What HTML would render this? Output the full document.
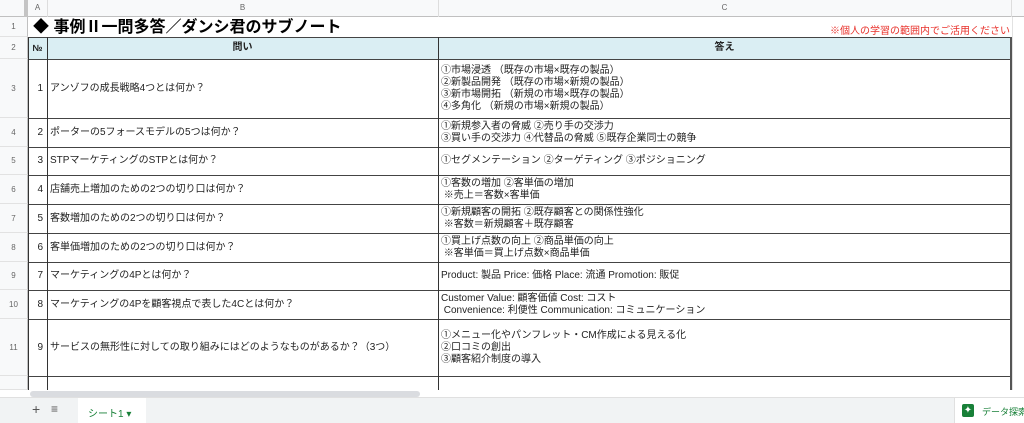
<!DOCTYPE html><html><head><meta charset="utf-8"><style>
*{margin:0;padding:0;box-sizing:border-box}
body{width:1024px;height:423px;overflow:hidden;background:#fff;position:relative;font-family:"Liberation Sans","Noto Sans CJK JP",sans-serif;font-size:10px;color:#222}
.a{position:absolute}
.rh{position:absolute;left:0;width:28px;background:#f8f9fa;border-right:1px solid #c0c0c0;border-bottom:1px solid #e2e2e2;color:#666;font-size:8px;display:flex;align-items:center;justify-content:center}
.hl{position:absolute;left:28px;width:983px;height:1px;background:#444}
.vl{position:absolute;width:1px;background:#333}
.cell{position:absolute;display:flex;align-items:center;line-height:12px}
.n{justify-content:flex-end;padding-right:4px;font-size:10px}
</style></head><body>
<div class="a" style="left:0;top:0;width:1024px;height:17px;background:#f8f9fa;border-bottom:1px solid #c0c0c0"></div>
<div class="a" style="left:0;top:0;width:28px;height:17px;border-right:4px solid #c4c4c4"></div>
<div class="a" style="left:28px;top:3px;width:19px;text-align:center;font-size:8px;color:#666">A</div>
<div class="a" style="left:47px;top:0;width:1px;height:17px;background:#ddd"></div>
<div class="a" style="left:47px;top:3px;width:391px;text-align:center;font-size:8px;color:#666">B</div>
<div class="a" style="left:438px;top:0;width:1px;height:17px;background:#ddd"></div>
<div class="a" style="left:438px;top:3px;width:573px;text-align:center;font-size:8px;color:#666">C</div>
<div class="a" style="left:1011px;top:0;width:1px;height:17px;background:#ddd"></div>
<div class="rh" style="top:17px;height:20px">1</div>
<div class="rh" style="top:37px;height:22px">2</div>
<div class="rh" style="top:59px;height:59px">3</div>
<div class="rh" style="top:118px;height:29px">4</div>
<div class="rh" style="top:147px;height:28px">5</div>
<div class="rh" style="top:175px;height:29px">6</div>
<div class="rh" style="top:204px;height:29px">7</div>
<div class="rh" style="top:233px;height:29px">8</div>
<div class="rh" style="top:262px;height:28px">9</div>
<div class="rh" style="top:290px;height:29px">10</div>
<div class="rh" style="top:319px;height:57px">11</div>
<div class="rh" style="top:376px;height:14px"></div>
<div class="a" style="left:1012px;top:17px;width:12px;height:373px;border-left:1px solid #e2e2e2"></div>
<div class="a" style="left:33px;top:17px;height:20px;font-size:16px;font-weight:bold;line-height:21px;color:#000">◆ 事例Ⅱ一問多答／ダンシ君のサブノート</div>
<div class="a" style="left:830px;top:22px;font-size:10px;color:#e8302a">※個人の学習の範囲内でご活用ください</div>
<div class="a" style="left:28px;top:37px;width:983px;height:22px;background:#daeef3"></div>
<div class="cell" style="left:28px;top:37px;width:19px;height:22px;justify-content:center;font-weight:bold;font-size:9px">№</div>
<div class="cell" style="left:47px;top:37px;width:391px;height:22px;justify-content:center;font-weight:bold">問い</div>
<div class="cell" style="left:438px;top:37px;width:573px;height:22px;justify-content:center;font-weight:bold">答え</div>
<div class="hl" style="top:37px"></div>
<div class="hl" style="top:59px"></div>
<div class="hl" style="top:118px"></div>
<div class="hl" style="top:147px"></div>
<div class="hl" style="top:175px"></div>
<div class="hl" style="top:204px"></div>
<div class="hl" style="top:233px"></div>
<div class="hl" style="top:262px"></div>
<div class="hl" style="top:290px"></div>
<div class="hl" style="top:319px"></div>
<div class="hl" style="top:376px"></div>
<div class="vl" style="left:28px;top:37px;height:353px"></div>
<div class="vl" style="left:47px;top:37px;height:353px"></div>
<div class="vl" style="left:438px;top:37px;height:353px"></div>
<div class="vl" style="left:1010px;top:37px;height:353px;width:2px;background:#555"></div>
<div class="cell n" style="left:28px;top:59px;width:19px;height:59px">1</div>
<div class="cell" style="left:50px;top:59px;height:59px">アンゾフの成長戦略4つとは何か？</div>
<div class="cell" style="left:441px;top:59px;height:59px">①市場浸透 （既存の市場×既存の製品）<br>②新製品開発 （既存の市場×新規の製品）<br>③新市場開拓 （新規の市場×既存の製品）<br>④多角化 （新規の市場×新規の製品）</div>
<div class="cell n" style="left:28px;top:118px;width:19px;height:29px">2</div>
<div class="cell" style="left:50px;top:118px;height:29px">ポーターの5フォースモデルの5つは何か？</div>
<div class="cell" style="left:441px;top:118px;height:29px">①新規参入者の脅威 ②売り手の交渉力<br>③買い手の交渉力 ④代替品の脅威 ⑤既存企業同士の競争</div>
<div class="cell n" style="left:28px;top:147px;width:19px;height:28px">3</div>
<div class="cell" style="left:50px;top:147px;height:28px">STPマーケティングのSTPとは何か？</div>
<div class="cell" style="left:441px;top:147px;height:28px">①セグメンテーション ②ターゲティング ③ポジショニング</div>
<div class="cell n" style="left:28px;top:175px;width:19px;height:29px">4</div>
<div class="cell" style="left:50px;top:175px;height:29px">店舗売上増加のための2つの切り口は何か？</div>
<div class="cell" style="left:441px;top:175px;height:29px">①客数の増加 ②客単価の増加<br>&nbsp;※売上＝客数×客単価</div>
<div class="cell n" style="left:28px;top:204px;width:19px;height:29px">5</div>
<div class="cell" style="left:50px;top:204px;height:29px">客数増加のための2つの切り口は何か？</div>
<div class="cell" style="left:441px;top:204px;height:29px">①新規顧客の開拓 ②既存顧客との関係性強化<br>&nbsp;※客数＝新規顧客＋既存顧客</div>
<div class="cell n" style="left:28px;top:233px;width:19px;height:29px">6</div>
<div class="cell" style="left:50px;top:233px;height:29px">客単価増加のための2つの切り口は何か？</div>
<div class="cell" style="left:441px;top:233px;height:29px">①買上げ点数の向上 ②商品単価の向上<br>&nbsp;※客単価＝買上げ点数×商品単価</div>
<div class="cell n" style="left:28px;top:262px;width:19px;height:28px">7</div>
<div class="cell" style="left:50px;top:262px;height:28px">マーケティングの4Pとは何か？</div>
<div class="cell" style="left:441px;top:262px;height:28px">Product: 製品 Price: 価格 Place: 流通 Promotion: 販促</div>
<div class="cell n" style="left:28px;top:290px;width:19px;height:29px">8</div>
<div class="cell" style="left:50px;top:290px;height:29px">マーケティングの4Pを顧客視点で表した4Cとは何か？</div>
<div class="cell" style="left:441px;top:290px;height:29px">Customer Value: 顧客価値 Cost: コスト<br>&nbsp;Convenience: 利便性 Communication: コミュニケーション</div>
<div class="cell n" style="left:28px;top:319px;width:19px;height:57px">9</div>
<div class="cell" style="left:50px;top:319px;height:57px">サービスの無形性に対しての取り組みにはどのようなものがあるか？（3つ）</div>
<div class="cell" style="left:441px;top:319px;height:57px">①メニュー化やパンフレット・CM作成による見える化<br>②口コミの創出<br>③顧客紹介制度の導入</div>
<div class="a" style="left:0;top:390px;width:1024px;height:8px;background:#fff"></div>
<div class="a" style="left:30px;top:391px;width:390px;height:6px;background:#dadce0;border-radius:3px"></div>
<div class="a" style="left:0;top:397px;width:1024px;height:26px;background:#f1f3f4;border-top:1px solid #e0e0e0"></div>
<div class="a" style="left:32px;top:401px;font-size:14px;color:#555">+</div>
<div class="a" style="left:51px;top:402px;font-size:12px;color:#555">≡</div>
<div class="a" style="left:78px;top:398px;width:68px;height:25px;background:#fff"></div>
<div class="a" style="left:88px;top:405px;font-size:10px;color:#188038">シート1 ▾</div>
<div class="a" style="left:954px;top:398px;width:70px;height:25px;background:#fff;border-left:1px solid #e0e0e0"></div>
<div class="a" style="left:962px;top:404px;width:12px;height:13px;background:#188038;border-radius:2px;color:#fff;font-size:10px;line-height:13px;text-align:center">✦</div>
<div class="a" style="left:982px;top:405px;font-size:9px;color:#188038;white-space:nowrap">データ探索</div>
</body></html>
